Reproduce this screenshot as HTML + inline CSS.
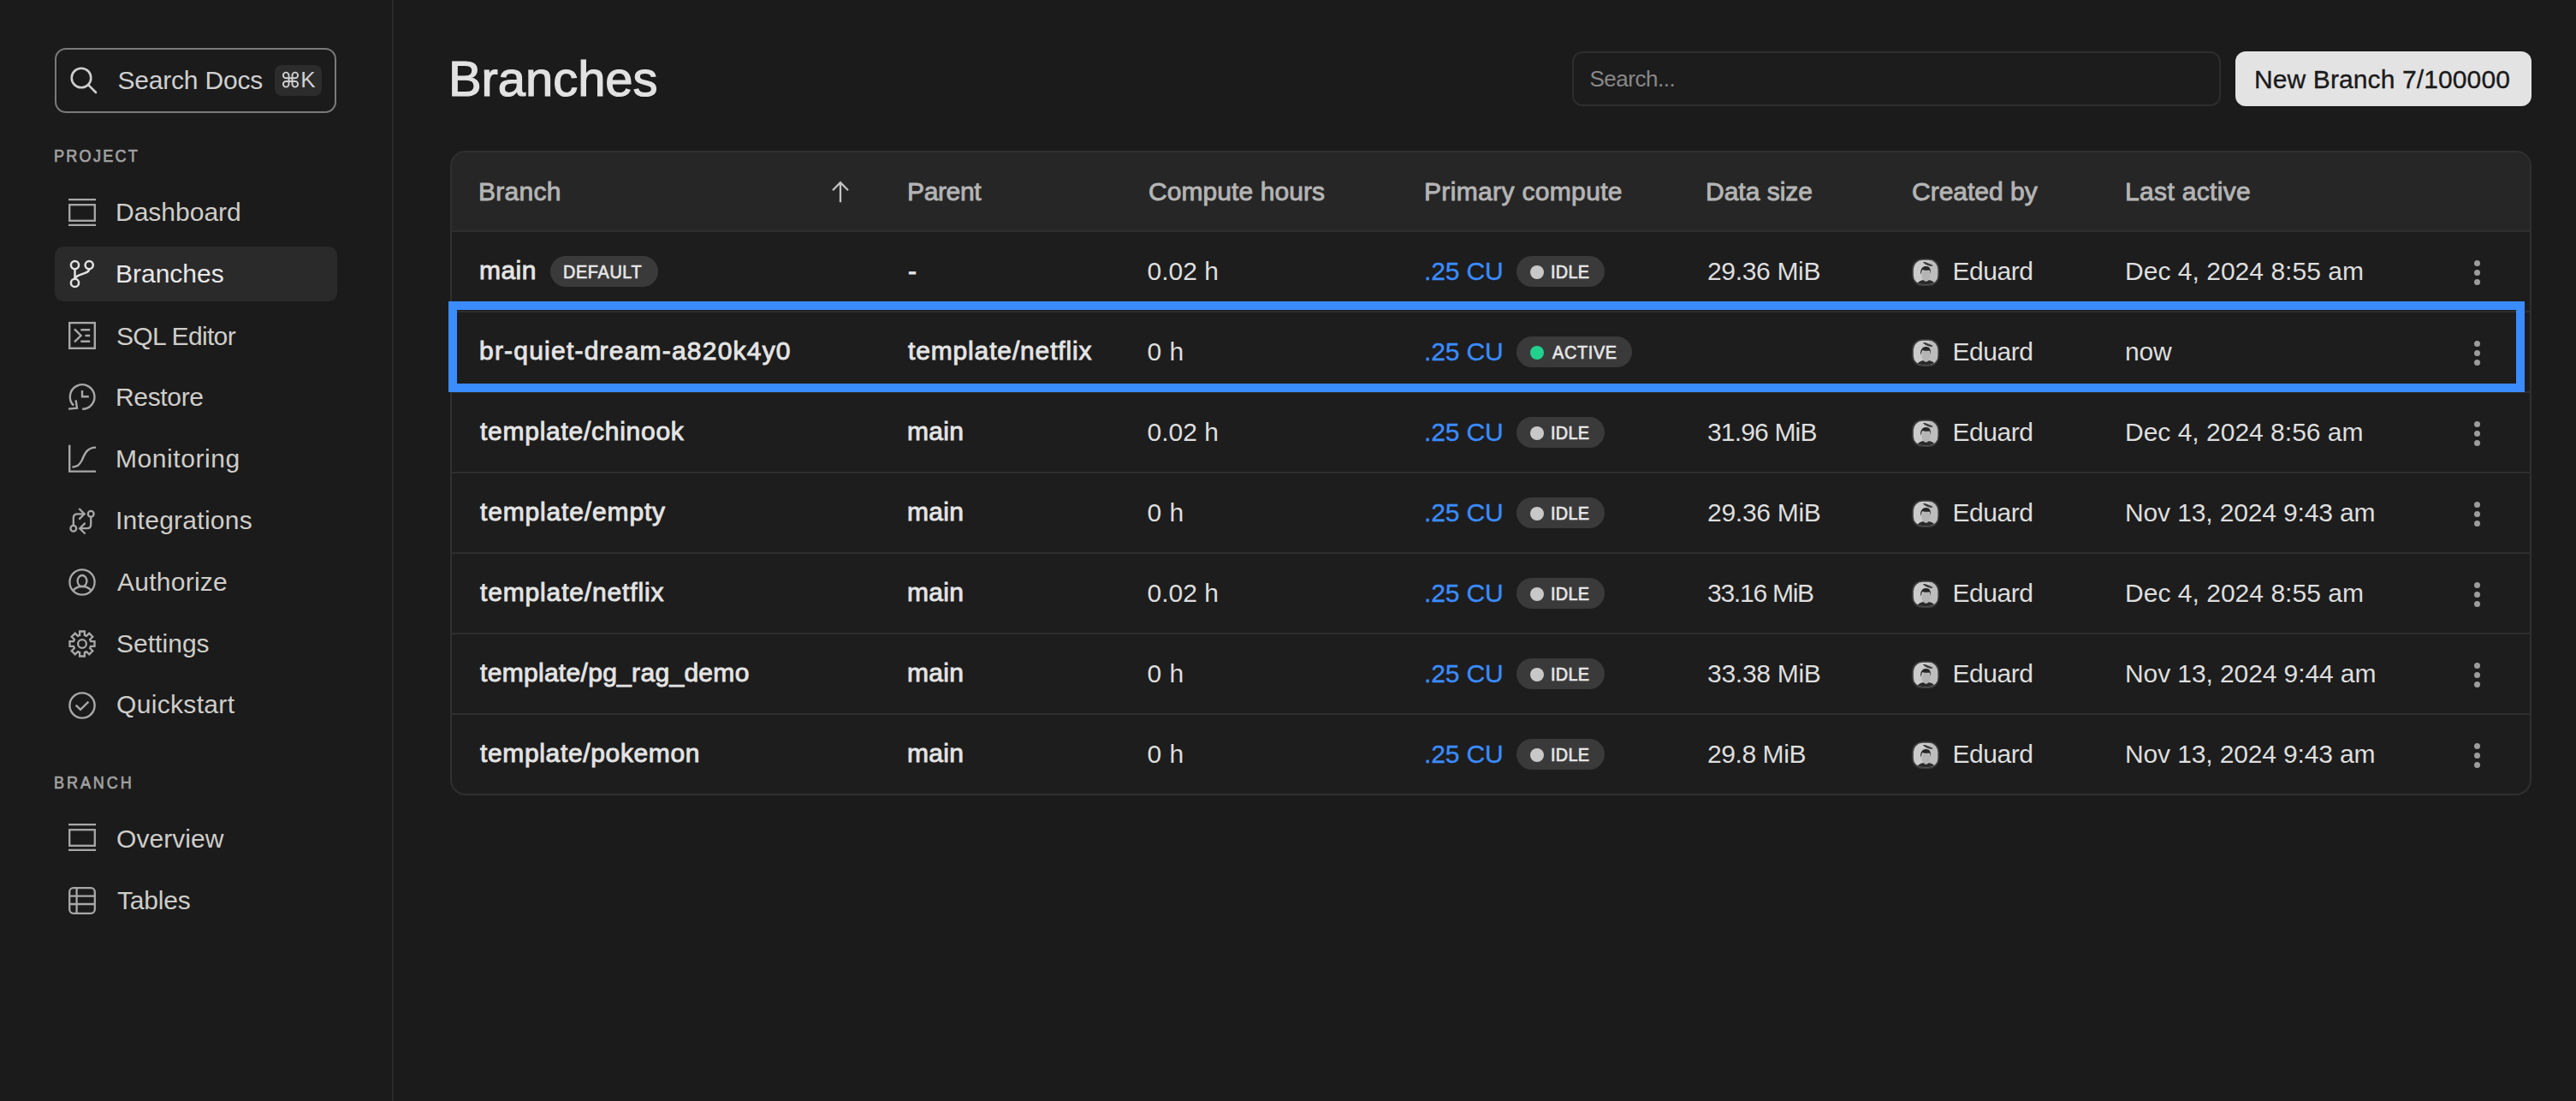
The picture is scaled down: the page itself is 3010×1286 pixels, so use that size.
<!DOCTYPE html><html><head><meta charset="utf-8"><style>
html,body{margin:0;padding:0;width:3010px;height:1286px;overflow:hidden;background:#1b1b1b;}
body{position:relative;font-family:"Liberation Sans",sans-serif;}
.a{position:absolute;box-sizing:border-box;}
.t{position:absolute;white-space:pre;line-height:1;}
svg{position:absolute;overflow:visible;}
</style></head><body>

<div class="a" style="left:458px;top:0;width:2px;height:1286px;background:#2a2a2a"></div>
<div class="a" style="left:64px;top:56px;width:329px;height:76px;border:2px solid #7a7a7a;border-radius:13px"></div>
<div class="a" style="left:321px;top:76px;width:55px;height:36px;border-radius:8px;background:#2c2c2c"></div>
<div class="a" style="left:64px;top:288px;width:330px;height:64px;border-radius:10px;background:#2a2a2a"></div>
<div class="a" style="left:1837px;top:60px;width:758px;height:64px;border:2px solid #2d2d2d;border-radius:12px;background:#1c1c1c"></div>
<div class="a" style="left:2612px;top:60px;width:346px;height:64px;border-radius:12px;background:#e3e3e3"></div>
<div class="a" style="left:526px;top:176px;width:2432px;height:753px;border:2px solid #303030;border-radius:18px;background:#1d1d1d;overflow:hidden">
<div class="a" style="left:0;top:0;width:2428px;height:91px;background:#262626"></div>
<div class="a" style="left:0;top:91px;width:2428px;height:2px;background:#2e2e2e"></div>
<div class="a" style="left:0;top:185px;width:2428px;height:2px;background:#2e2e2e"></div>
<div class="a" style="left:0;top:279px;width:2428px;height:2px;background:#2e2e2e"></div>
<div class="a" style="left:0;top:373px;width:2428px;height:2px;background:#2e2e2e"></div>
<div class="a" style="left:0;top:467px;width:2428px;height:2px;background:#2e2e2e"></div>
<div class="a" style="left:0;top:561px;width:2428px;height:2px;background:#2e2e2e"></div>
<div class="a" style="left:0;top:655px;width:2428px;height:2px;background:#2e2e2e"></div>
</div>
<div class="a" style="left:524px;top:352px;width:2426px;height:106px;border:10px solid #3b8cff"></div>
<svg style="left:80px;top:76px" width="40" height="40" viewBox="80 76 40 40" fill="none" stroke="#cfcfcf" stroke-width="2.6"><circle cx="95" cy="91" r="11.3"/><path d="M103.2 99.2L112 108" stroke-linecap="round"/></svg>
<svg style="left:326px;top:80px" width="28" height="28" viewBox="326 80 28 28" fill="none" stroke="#d0d0d0" stroke-width="1.9"><path d="M337.5 91.2V87.9A3.3 3.3 0 1 0 334.2 91.2H344.8A3.3 3.3 0 1 0 341.5 87.9V98.3A3.3 3.3 0 1 0 344.8 95H334.2A3.3 3.3 0 1 0 337.5 98.3Z"/></svg>
<svg style="left:76px;top:228px" width="40" height="40" viewBox="76 228 40 40" fill="none" stroke="#a8a8a8" stroke-width="2.3"><path d="M80 233.1H112M80 262.9H112"/><rect x="81.2" y="239.2" width="29.6" height="18.6"/></svg>
<svg style="left:76px;top:958px" width="40" height="40" viewBox="76 958 40 40" fill="none" stroke="#a8a8a8" stroke-width="2.3"><path d="M80 963.1H112M80 992.9H112"/><rect x="81.2" y="969.2" width="29.6" height="18.6"/></svg>
<svg style="left:76px;top:296px" width="40" height="44" viewBox="76 296 40 44" fill="none" stroke="#e2e2e2" stroke-width="2.5"><circle cx="87.5" cy="309.6" r="4.6"/><circle cx="104.2" cy="309.6" r="4.6"/><circle cx="87.5" cy="330.4" r="4.6"/><path d="M87.5 314.2V325.8M104.2 314.2C104.2 317 102.5 317.6 100 318.6L92 321.6C89.5 322.6 88 323.8 87.8 325.8"/></svg>
<svg style="left:76px;top:372px" width="40" height="40" viewBox="76 372 40 40" fill="none" stroke="#a8a8a8" stroke-width="2.4"><rect x="81.2" y="377.1" width="29.6" height="29.7"/><path d="M87 384.3L94.6 392L87 399.4M94.3 385.2H105.2M99.4 392H105.2M94.3 398.8H105.2"/></svg>
<svg style="left:76px;top:444px" width="40" height="40" viewBox="76 444 40 40" fill="none" stroke="#a8a8a8" stroke-width="2.4"><path d="M96.2 477.8A14.3 14.3 0 1 0 86 473.6"/><path d="M80 477.6L90 476.6L88.6 467.4M96 456V463.2H103.8"/></svg>
<svg style="left:76px;top:516px" width="40" height="40" viewBox="76 516 40 40" fill="none" stroke="#a8a8a8" stroke-width="2.4"><path d="M81.2 519.8V550.6H112M84.4 545.6C90 545 92.5 543.5 95.5 538C99 530 101.5 522.8 112 522.6"/></svg>
<svg style="left:76px;top:588px" width="40" height="40" viewBox="76 588 40 40" fill="none" stroke="#a8a8a8" stroke-width="2.3"><circle cx="85.8" cy="617.2" r="3.4"/><circle cx="106.2" cy="600.3" r="3.4"/><path d="M85.8 613.8V605C85.8 602 87.5 600.3 90.5 600.3H99M92.3 594L98.7 600.3L92.3 606.6"/><path d="M106.2 603.7V612.5C106.2 615.5 104.5 617.2 101.5 617.2H93.2M99.6 610.9L93.2 617.2L99.6 623.5"/></svg>
<svg style="left:76px;top:660px" width="40" height="40" viewBox="76 660 40 40" fill="none" stroke="#a8a8a8" stroke-width="2.3"><circle cx="96" cy="680" r="14.6"/><ellipse cx="96" cy="678.6" rx="5.4" ry="6.6"/><path d="M85.2 690.2C87.6 686.6 91.2 685 96 685C100.8 685 104.4 686.6 106.8 690.2"/></svg>
<svg style="left:76px;top:732px" width="40" height="40" viewBox="76 732 40 40" fill="none" stroke="#a8a8a8" stroke-width="2.3"><path d="M93.14 742.00L93.12 737.48L98.88 737.48L98.86 742.00L101.05 742.91L104.23 739.70L108.30 743.77L105.09 746.95L106.00 749.14L110.52 749.12L110.52 754.88L106.00 754.86L105.09 757.05L108.30 760.23L104.23 764.30L101.05 761.09L98.86 762.00L98.88 766.52L93.12 766.52L93.14 762.00L90.95 761.09L87.77 764.30L83.70 760.23L86.91 757.05L86.00 754.86L81.48 754.88L81.48 749.12L86.00 749.14L86.91 746.95L83.70 743.77L87.77 739.70L90.95 742.91Z" stroke-linejoin="miter"/><circle cx="96" cy="752" r="4.9"/></svg>
<svg style="left:76px;top:804px" width="40" height="40" viewBox="76 804 40 40" fill="none" stroke="#a8a8a8" stroke-width="2.4"><circle cx="96" cy="824" r="14.6"/><path d="M88.6 823.6L94 828.8L103.4 819.6"/></svg>
<svg style="left:76px;top:1032px" width="40" height="40" viewBox="76 1032 40 40" fill="none" stroke="#a8a8a8" stroke-width="2.3"><rect x="81.2" y="1037.2" width="29.6" height="29.6" rx="4.6"/><path d="M89.6 1037.2V1066.8M81.2 1046.7H110.8M81.2 1056H110.8"/></svg>
<svg style="left:962px;top:202px" width="40" height="40" viewBox="962 202 40 40"><path d="M982 236.2V213.8M973 222.2L982 213.2L991 222.2" fill="none" stroke="#c2c2c2" stroke-width="2.3"/></svg>
<div class="a" style="left:643px;top:299px;width:126px;height:36px;border-radius:18px;background:#3a3a3a"></div>
<div class="a" style="left:1771.7px;top:299.0px;width:103.0px;height:36px;border-radius:18px;background:#3a3a3a"></div>
<div class="a" style="left:1787.7px;top:309.6px;width:16px;height:16px;border-radius:50%;background:#c8c8c8"></div>
<svg style="left:2234.2px;top:301.8px" width="32" height="32" viewBox="0 0 31.6 31.6"><rect x="0" y="0" width="31.6" height="31.6" rx="12" fill="#3a3a3a"/><clipPath id="avc0"><rect x="1.8" y="1.8" width="28" height="28" rx="10.4"/></clipPath><g clip-path="url(#avc0)"><rect x="0" y="0" width="31.6" height="31.6" fill="#cbcbcb"/><rect x="20" y="0" width="12" height="31.6" fill="#bdbdbd"/><ellipse cx="16.2" cy="19.6" rx="4.9" ry="6.4" fill="#b4b4b4"/><path d="M10.2 18.5C9.4 13 11.5 9 16 8.8C20.5 8.6 22.2 12 21.6 17.5L20.6 13.6C18 13.8 14 13.6 12.2 12.8C11.3 14.5 11 16.5 10.2 18.5Z" fill="#262626"/><path d="M12.6 4.2C15 3 19 5.5 24.6 7.8L22.6 9C19 8.4 16 7.6 12.6 4.2Z" fill="#3c3c3c"/><path d="M5 31.6C6 27.5 9 25.6 13.2 24.8C15 27 17.5 27 19.6 24.8C23.5 25.4 26.5 27.5 27.5 31.6Z" fill="#2a2a2a"/></g></svg>
<div class="a" style="left:2890.5px;top:303.5px;width:7px;height:7px;border-radius:50%;background:#9c9c9c"></div>
<div class="a" style="left:2890.5px;top:314.5px;width:7px;height:7px;border-radius:50%;background:#9c9c9c"></div>
<div class="a" style="left:2890.5px;top:325.5px;width:7px;height:7px;border-radius:50%;background:#9c9c9c"></div>
<div class="a" style="left:1771.7px;top:393.0px;width:135.3px;height:36px;border-radius:18px;background:#3a3a3a"></div>
<div class="a" style="left:1787.7px;top:403.6px;width:16px;height:16px;border-radius:50%;background:#21d28e"></div>
<svg style="left:2234.2px;top:395.8px" width="32" height="32" viewBox="0 0 31.6 31.6"><rect x="0" y="0" width="31.6" height="31.6" rx="12" fill="#3a3a3a"/><clipPath id="avc1"><rect x="1.8" y="1.8" width="28" height="28" rx="10.4"/></clipPath><g clip-path="url(#avc1)"><rect x="0" y="0" width="31.6" height="31.6" fill="#cbcbcb"/><rect x="20" y="0" width="12" height="31.6" fill="#bdbdbd"/><ellipse cx="16.2" cy="19.6" rx="4.9" ry="6.4" fill="#b4b4b4"/><path d="M10.2 18.5C9.4 13 11.5 9 16 8.8C20.5 8.6 22.2 12 21.6 17.5L20.6 13.6C18 13.8 14 13.6 12.2 12.8C11.3 14.5 11 16.5 10.2 18.5Z" fill="#262626"/><path d="M12.6 4.2C15 3 19 5.5 24.6 7.8L22.6 9C19 8.4 16 7.6 12.6 4.2Z" fill="#3c3c3c"/><path d="M5 31.6C6 27.5 9 25.6 13.2 24.8C15 27 17.5 27 19.6 24.8C23.5 25.4 26.5 27.5 27.5 31.6Z" fill="#2a2a2a"/></g></svg>
<div class="a" style="left:2890.5px;top:397.5px;width:7px;height:7px;border-radius:50%;background:#9c9c9c"></div>
<div class="a" style="left:2890.5px;top:408.5px;width:7px;height:7px;border-radius:50%;background:#9c9c9c"></div>
<div class="a" style="left:2890.5px;top:419.5px;width:7px;height:7px;border-radius:50%;background:#9c9c9c"></div>
<div class="a" style="left:1771.7px;top:487.0px;width:103.0px;height:36px;border-radius:18px;background:#3a3a3a"></div>
<div class="a" style="left:1787.7px;top:497.6px;width:16px;height:16px;border-radius:50%;background:#c8c8c8"></div>
<svg style="left:2234.2px;top:489.8px" width="32" height="32" viewBox="0 0 31.6 31.6"><rect x="0" y="0" width="31.6" height="31.6" rx="12" fill="#3a3a3a"/><clipPath id="avc2"><rect x="1.8" y="1.8" width="28" height="28" rx="10.4"/></clipPath><g clip-path="url(#avc2)"><rect x="0" y="0" width="31.6" height="31.6" fill="#cbcbcb"/><rect x="20" y="0" width="12" height="31.6" fill="#bdbdbd"/><ellipse cx="16.2" cy="19.6" rx="4.9" ry="6.4" fill="#b4b4b4"/><path d="M10.2 18.5C9.4 13 11.5 9 16 8.8C20.5 8.6 22.2 12 21.6 17.5L20.6 13.6C18 13.8 14 13.6 12.2 12.8C11.3 14.5 11 16.5 10.2 18.5Z" fill="#262626"/><path d="M12.6 4.2C15 3 19 5.5 24.6 7.8L22.6 9C19 8.4 16 7.6 12.6 4.2Z" fill="#3c3c3c"/><path d="M5 31.6C6 27.5 9 25.6 13.2 24.8C15 27 17.5 27 19.6 24.8C23.5 25.4 26.5 27.5 27.5 31.6Z" fill="#2a2a2a"/></g></svg>
<div class="a" style="left:2890.5px;top:491.5px;width:7px;height:7px;border-radius:50%;background:#9c9c9c"></div>
<div class="a" style="left:2890.5px;top:502.5px;width:7px;height:7px;border-radius:50%;background:#9c9c9c"></div>
<div class="a" style="left:2890.5px;top:513.5px;width:7px;height:7px;border-radius:50%;background:#9c9c9c"></div>
<div class="a" style="left:1771.7px;top:581.0px;width:103.0px;height:36px;border-radius:18px;background:#3a3a3a"></div>
<div class="a" style="left:1787.7px;top:591.6px;width:16px;height:16px;border-radius:50%;background:#c8c8c8"></div>
<svg style="left:2234.2px;top:583.8px" width="32" height="32" viewBox="0 0 31.6 31.6"><rect x="0" y="0" width="31.6" height="31.6" rx="12" fill="#3a3a3a"/><clipPath id="avc3"><rect x="1.8" y="1.8" width="28" height="28" rx="10.4"/></clipPath><g clip-path="url(#avc3)"><rect x="0" y="0" width="31.6" height="31.6" fill="#cbcbcb"/><rect x="20" y="0" width="12" height="31.6" fill="#bdbdbd"/><ellipse cx="16.2" cy="19.6" rx="4.9" ry="6.4" fill="#b4b4b4"/><path d="M10.2 18.5C9.4 13 11.5 9 16 8.8C20.5 8.6 22.2 12 21.6 17.5L20.6 13.6C18 13.8 14 13.6 12.2 12.8C11.3 14.5 11 16.5 10.2 18.5Z" fill="#262626"/><path d="M12.6 4.2C15 3 19 5.5 24.6 7.8L22.6 9C19 8.4 16 7.6 12.6 4.2Z" fill="#3c3c3c"/><path d="M5 31.6C6 27.5 9 25.6 13.2 24.8C15 27 17.5 27 19.6 24.8C23.5 25.4 26.5 27.5 27.5 31.6Z" fill="#2a2a2a"/></g></svg>
<div class="a" style="left:2890.5px;top:585.5px;width:7px;height:7px;border-radius:50%;background:#9c9c9c"></div>
<div class="a" style="left:2890.5px;top:596.5px;width:7px;height:7px;border-radius:50%;background:#9c9c9c"></div>
<div class="a" style="left:2890.5px;top:607.5px;width:7px;height:7px;border-radius:50%;background:#9c9c9c"></div>
<div class="a" style="left:1771.7px;top:675.0px;width:103.0px;height:36px;border-radius:18px;background:#3a3a3a"></div>
<div class="a" style="left:1787.7px;top:685.6px;width:16px;height:16px;border-radius:50%;background:#c8c8c8"></div>
<svg style="left:2234.2px;top:677.8px" width="32" height="32" viewBox="0 0 31.6 31.6"><rect x="0" y="0" width="31.6" height="31.6" rx="12" fill="#3a3a3a"/><clipPath id="avc4"><rect x="1.8" y="1.8" width="28" height="28" rx="10.4"/></clipPath><g clip-path="url(#avc4)"><rect x="0" y="0" width="31.6" height="31.6" fill="#cbcbcb"/><rect x="20" y="0" width="12" height="31.6" fill="#bdbdbd"/><ellipse cx="16.2" cy="19.6" rx="4.9" ry="6.4" fill="#b4b4b4"/><path d="M10.2 18.5C9.4 13 11.5 9 16 8.8C20.5 8.6 22.2 12 21.6 17.5L20.6 13.6C18 13.8 14 13.6 12.2 12.8C11.3 14.5 11 16.5 10.2 18.5Z" fill="#262626"/><path d="M12.6 4.2C15 3 19 5.5 24.6 7.8L22.6 9C19 8.4 16 7.6 12.6 4.2Z" fill="#3c3c3c"/><path d="M5 31.6C6 27.5 9 25.6 13.2 24.8C15 27 17.5 27 19.6 24.8C23.5 25.4 26.5 27.5 27.5 31.6Z" fill="#2a2a2a"/></g></svg>
<div class="a" style="left:2890.5px;top:679.5px;width:7px;height:7px;border-radius:50%;background:#9c9c9c"></div>
<div class="a" style="left:2890.5px;top:690.5px;width:7px;height:7px;border-radius:50%;background:#9c9c9c"></div>
<div class="a" style="left:2890.5px;top:701.5px;width:7px;height:7px;border-radius:50%;background:#9c9c9c"></div>
<div class="a" style="left:1771.7px;top:769.0px;width:103.0px;height:36px;border-radius:18px;background:#3a3a3a"></div>
<div class="a" style="left:1787.7px;top:779.6px;width:16px;height:16px;border-radius:50%;background:#c8c8c8"></div>
<svg style="left:2234.2px;top:771.8px" width="32" height="32" viewBox="0 0 31.6 31.6"><rect x="0" y="0" width="31.6" height="31.6" rx="12" fill="#3a3a3a"/><clipPath id="avc5"><rect x="1.8" y="1.8" width="28" height="28" rx="10.4"/></clipPath><g clip-path="url(#avc5)"><rect x="0" y="0" width="31.6" height="31.6" fill="#cbcbcb"/><rect x="20" y="0" width="12" height="31.6" fill="#bdbdbd"/><ellipse cx="16.2" cy="19.6" rx="4.9" ry="6.4" fill="#b4b4b4"/><path d="M10.2 18.5C9.4 13 11.5 9 16 8.8C20.5 8.6 22.2 12 21.6 17.5L20.6 13.6C18 13.8 14 13.6 12.2 12.8C11.3 14.5 11 16.5 10.2 18.5Z" fill="#262626"/><path d="M12.6 4.2C15 3 19 5.5 24.6 7.8L22.6 9C19 8.4 16 7.6 12.6 4.2Z" fill="#3c3c3c"/><path d="M5 31.6C6 27.5 9 25.6 13.2 24.8C15 27 17.5 27 19.6 24.8C23.5 25.4 26.5 27.5 27.5 31.6Z" fill="#2a2a2a"/></g></svg>
<div class="a" style="left:2890.5px;top:773.5px;width:7px;height:7px;border-radius:50%;background:#9c9c9c"></div>
<div class="a" style="left:2890.5px;top:784.5px;width:7px;height:7px;border-radius:50%;background:#9c9c9c"></div>
<div class="a" style="left:2890.5px;top:795.5px;width:7px;height:7px;border-radius:50%;background:#9c9c9c"></div>
<div class="a" style="left:1771.7px;top:863.0px;width:103.0px;height:36px;border-radius:18px;background:#3a3a3a"></div>
<div class="a" style="left:1787.7px;top:873.6px;width:16px;height:16px;border-radius:50%;background:#c8c8c8"></div>
<svg style="left:2234.2px;top:865.8px" width="32" height="32" viewBox="0 0 31.6 31.6"><rect x="0" y="0" width="31.6" height="31.6" rx="12" fill="#3a3a3a"/><clipPath id="avc6"><rect x="1.8" y="1.8" width="28" height="28" rx="10.4"/></clipPath><g clip-path="url(#avc6)"><rect x="0" y="0" width="31.6" height="31.6" fill="#cbcbcb"/><rect x="20" y="0" width="12" height="31.6" fill="#bdbdbd"/><ellipse cx="16.2" cy="19.6" rx="4.9" ry="6.4" fill="#b4b4b4"/><path d="M10.2 18.5C9.4 13 11.5 9 16 8.8C20.5 8.6 22.2 12 21.6 17.5L20.6 13.6C18 13.8 14 13.6 12.2 12.8C11.3 14.5 11 16.5 10.2 18.5Z" fill="#262626"/><path d="M12.6 4.2C15 3 19 5.5 24.6 7.8L22.6 9C19 8.4 16 7.6 12.6 4.2Z" fill="#3c3c3c"/><path d="M5 31.6C6 27.5 9 25.6 13.2 24.8C15 27 17.5 27 19.6 24.8C23.5 25.4 26.5 27.5 27.5 31.6Z" fill="#2a2a2a"/></g></svg>
<div class="a" style="left:2890.5px;top:867.5px;width:7px;height:7px;border-radius:50%;background:#9c9c9c"></div>
<div class="a" style="left:2890.5px;top:878.5px;width:7px;height:7px;border-radius:50%;background:#9c9c9c"></div>
<div class="a" style="left:2890.5px;top:889.5px;width:7px;height:7px;border-radius:50%;background:#9c9c9c"></div>
<div class="t" id="sd" style="left:137.50px;top:78.80px;font-size:30px;font-weight:400;color:#cfcfcf;letter-spacing:-0.200px">Search Docs</div>
<div class="t" id="k" style="left:351.20px;top:79.90px;font-size:26px;font-weight:400;color:#d0d0d0;letter-spacing:0.000px">K</div>
<div class="t" id="proj" style="left:63.00px;top:171.00px;font-size:21px;font-weight:400;color:#a2a2a2;letter-spacing:2.616px;-webkit-text-stroke:0.70px #a2a2a2;transform:scaleX(0.860);transform-origin:0 0">PROJECT</div>
<div class="t" id="nav0" style="left:135.00px;top:233.00px;font-size:30px;font-weight:400;color:#cfcdc9;letter-spacing:0.000px">Dashboard</div>
<div class="t" id="nav1" style="left:135.00px;top:305.00px;font-size:30px;font-weight:400;color:#e8e8e8;letter-spacing:0.000px">Branches</div>
<div class="t" id="nav2" style="left:136.00px;top:377.70px;font-size:30px;font-weight:400;color:#cfcdc9;letter-spacing:-0.667px">SQL Editor</div>
<div class="t" id="nav3" style="left:135.00px;top:449.40px;font-size:30px;font-weight:400;color:#cfcdc9;letter-spacing:-0.333px">Restore</div>
<div class="t" id="nav4" style="left:135.00px;top:521.00px;font-size:30px;font-weight:400;color:#cfcdc9;letter-spacing:0.556px">Monitoring</div>
<div class="t" id="nav5" style="left:135.00px;top:592.80px;font-size:30px;font-weight:400;color:#cfcdc9;letter-spacing:0.273px">Integrations</div>
<div class="t" id="nav6" style="left:137.00px;top:665.00px;font-size:30px;font-weight:400;color:#cfcdc9;letter-spacing:0.250px">Authorize</div>
<div class="t" id="nav7" style="left:136.00px;top:736.70px;font-size:30px;font-weight:400;color:#cfcdc9;letter-spacing:0.029px">Settings</div>
<div class="t" id="nav8" style="left:136.00px;top:808.00px;font-size:30px;font-weight:400;color:#cfcdc9;letter-spacing:0.333px">Quickstart</div>
<div class="t" id="brl" style="left:63.00px;top:902.90px;font-size:21px;font-weight:400;color:#a2a2a2;letter-spacing:3.372px;-webkit-text-stroke:0.70px #a2a2a2;transform:scaleX(0.860);transform-origin:0 0">BRANCH</div>
<div class="t" id="nav9" style="left:136.00px;top:964.50px;font-size:30px;font-weight:400;color:#cfcdc9;letter-spacing:0.057px">Overview</div>
<div class="t" id="nav10" style="left:137.00px;top:1036.60px;font-size:30px;font-weight:400;color:#cfcdc9;letter-spacing:-0.200px">Tables</div>
<div class="t" id="title" style="left:524.00px;top:62.50px;font-size:58px;font-weight:400;color:#e2e2e2;letter-spacing:-0.071px;-webkit-text-stroke:1.20px #e2e2e2">Branches</div>
<div class="t" id="sph" style="left:1857.40px;top:79.00px;font-size:26px;font-weight:400;color:#888888;letter-spacing:-0.463px">Search...</div>
<div class="t" id="btn" style="left:2634.00px;top:77.80px;font-size:30px;font-weight:400;color:#1a1a1a;letter-spacing:0.111px;-webkit-text-stroke:0.35px #1a1a1a">New Branch 7/100000</div>
<div class="t" id="h0" style="left:559.00px;top:208.50px;font-size:30px;font-weight:400;color:#b4b4b4;letter-spacing:0.280px;-webkit-text-stroke:0.90px #b4b4b4">Branch</div>
<div class="t" id="h1" style="left:1060.00px;top:208.50px;font-size:30px;font-weight:400;color:#b4b4b4;letter-spacing:-0.360px;-webkit-text-stroke:0.90px #b4b4b4">Parent</div>
<div class="t" id="h2" style="left:1342.00px;top:208.50px;font-size:30px;font-weight:400;color:#b4b4b4;letter-spacing:0.083px;-webkit-text-stroke:0.90px #b4b4b4">Compute hours</div>
<div class="t" id="h3" style="left:1664.00px;top:208.50px;font-size:30px;font-weight:400;color:#b4b4b4;letter-spacing:0.343px;-webkit-text-stroke:0.90px #b4b4b4">Primary compute</div>
<div class="t" id="h4" style="left:1993.00px;top:208.50px;font-size:30px;font-weight:400;color:#b4b4b4;letter-spacing:0.000px;-webkit-text-stroke:0.90px #b4b4b4">Data size</div>
<div class="t" id="h5" style="left:2234.00px;top:208.50px;font-size:30px;font-weight:400;color:#b4b4b4;letter-spacing:0.000px;-webkit-text-stroke:0.90px #b4b4b4">Created by</div>
<div class="t" id="h6" style="left:2483.00px;top:208.50px;font-size:30px;font-weight:400;color:#b4b4b4;letter-spacing:0.340px;-webkit-text-stroke:0.90px #b4b4b4">Last active</div>
<div class="t" id="r0n" style="left:560.00px;top:300.90px;font-size:30px;font-weight:400;color:#e4e4e4;letter-spacing:0.467px;-webkit-text-stroke:0.90px #e4e4e4">main</div>
<div class="t" id="r0p" style="left:1061.00px;top:302.30px;font-size:30px;font-weight:400;color:#e4e4e4;letter-spacing:5.000px;-webkit-text-stroke:0.90px #e4e4e4">-</div>
<div class="t" id="r0c" style="left:1340.50px;top:302.30px;font-size:30px;font-weight:400;color:#dedede;letter-spacing:0.000px">0.02 h</div>
<div class="t" id="r0cu" style="left:1664.00px;top:302.30px;font-size:30px;font-weight:400;color:#3b8cff;letter-spacing:-0.160px;-webkit-text-stroke:0.35px #3b8cff">.25 CU</div>
<div class="t" id="r0st" style="left:1812.00px;top:307.10px;font-size:22px;font-weight:400;color:#e6e6e6;letter-spacing:0.370px;-webkit-text-stroke:0.70px #e6e6e6;transform:scaleX(0.900);transform-origin:0 0">IDLE</div>
<div class="t" id="r0ds" style="left:1995.00px;top:302.30px;font-size:30px;font-weight:400;color:#dedede;letter-spacing:-0.325px">29.36 MiB</div>
<div class="t" id="r0ed" style="left:2281.50px;top:302.30px;font-size:30px;font-weight:400;color:#dedede;letter-spacing:-0.440px">Eduard</div>
<div class="t" id="r0dt" style="left:2483.00px;top:302.30px;font-size:30px;font-weight:400;color:#dedede;letter-spacing:0.022px">Dec 4, 2024 8:55 am</div>
<div class="t" id="r1n" style="left:560.00px;top:394.90px;font-size:30px;font-weight:400;color:#e4e4e4;letter-spacing:1.214px;-webkit-text-stroke:0.90px #e4e4e4">br-quiet-dream-a820k4y0</div>
<div class="t" id="r1p" style="left:1061.00px;top:394.90px;font-size:30px;font-weight:400;color:#e4e4e4;letter-spacing:0.853px;-webkit-text-stroke:0.90px #e4e4e4">template/netflix</div>
<div class="t" id="r1c" style="left:1340.50px;top:396.30px;font-size:30px;font-weight:400;color:#dedede;letter-spacing:0.500px">0 h</div>
<div class="t" id="r1cu" style="left:1664.00px;top:396.30px;font-size:30px;font-weight:400;color:#3b8cff;letter-spacing:-0.160px;-webkit-text-stroke:0.35px #3b8cff">.25 CU</div>
<div class="t" id="r1st" style="left:1814.00px;top:401.10px;font-size:22px;font-weight:400;color:#e6e6e6;letter-spacing:0.778px;-webkit-text-stroke:0.70px #e6e6e6;transform:scaleX(0.900);transform-origin:0 0">ACTIVE</div>
<div class="t" id="r1ed" style="left:2281.50px;top:396.30px;font-size:30px;font-weight:400;color:#dedede;letter-spacing:-0.440px">Eduard</div>
<div class="t" id="r1dt" style="left:2483.00px;top:396.30px;font-size:30px;font-weight:400;color:#dedede;letter-spacing:-0.200px">now</div>
<div class="t" id="r2n" style="left:561.00px;top:488.90px;font-size:30px;font-weight:400;color:#e4e4e4;letter-spacing:0.733px;-webkit-text-stroke:0.90px #e4e4e4">template/chinook</div>
<div class="t" id="r2p" style="left:1060.00px;top:488.90px;font-size:30px;font-weight:400;color:#e4e4e4;letter-spacing:0.267px;-webkit-text-stroke:0.90px #e4e4e4">main</div>
<div class="t" id="r2c" style="left:1340.50px;top:490.30px;font-size:30px;font-weight:400;color:#dedede;letter-spacing:0.000px">0.02 h</div>
<div class="t" id="r2cu" style="left:1664.00px;top:490.30px;font-size:30px;font-weight:400;color:#3b8cff;letter-spacing:-0.160px;-webkit-text-stroke:0.35px #3b8cff">.25 CU</div>
<div class="t" id="r2st" style="left:1812.00px;top:495.10px;font-size:22px;font-weight:400;color:#e6e6e6;letter-spacing:0.370px;-webkit-text-stroke:0.70px #e6e6e6;transform:scaleX(0.900);transform-origin:0 0">IDLE</div>
<div class="t" id="r2ds" style="left:1995.00px;top:490.30px;font-size:30px;font-weight:400;color:#dedede;letter-spacing:-0.825px">31.96 MiB</div>
<div class="t" id="r2ed" style="left:2281.50px;top:490.30px;font-size:30px;font-weight:400;color:#dedede;letter-spacing:-0.440px">Eduard</div>
<div class="t" id="r2dt" style="left:2483.00px;top:490.30px;font-size:30px;font-weight:400;color:#dedede;letter-spacing:0.000px">Dec 4, 2024 8:56 am</div>
<div class="t" id="r3n" style="left:561.00px;top:582.90px;font-size:30px;font-weight:400;color:#e4e4e4;letter-spacing:0.846px;-webkit-text-stroke:0.90px #e4e4e4">template/empty</div>
<div class="t" id="r3p" style="left:1060.00px;top:582.90px;font-size:30px;font-weight:400;color:#e4e4e4;letter-spacing:0.267px;-webkit-text-stroke:0.90px #e4e4e4">main</div>
<div class="t" id="r3c" style="left:1340.50px;top:584.30px;font-size:30px;font-weight:400;color:#dedede;letter-spacing:0.500px">0 h</div>
<div class="t" id="r3cu" style="left:1664.00px;top:584.30px;font-size:30px;font-weight:400;color:#3b8cff;letter-spacing:-0.160px;-webkit-text-stroke:0.35px #3b8cff">.25 CU</div>
<div class="t" id="r3st" style="left:1812.00px;top:589.10px;font-size:22px;font-weight:400;color:#e6e6e6;letter-spacing:0.370px;-webkit-text-stroke:0.70px #e6e6e6;transform:scaleX(0.900);transform-origin:0 0">IDLE</div>
<div class="t" id="r3ds" style="left:1995.00px;top:584.30px;font-size:30px;font-weight:400;color:#dedede;letter-spacing:-0.275px">29.36 MiB</div>
<div class="t" id="r3ed" style="left:2281.50px;top:584.30px;font-size:30px;font-weight:400;color:#dedede;letter-spacing:-0.440px">Eduard</div>
<div class="t" id="r3dt" style="left:2483.00px;top:584.30px;font-size:30px;font-weight:400;color:#dedede;letter-spacing:-0.137px">Nov 13, 2024 9:43 am</div>
<div class="t" id="r4n" style="left:561.00px;top:676.90px;font-size:30px;font-weight:400;color:#e4e4e4;letter-spacing:0.847px;-webkit-text-stroke:0.90px #e4e4e4">template/netflix</div>
<div class="t" id="r4p" style="left:1060.00px;top:676.90px;font-size:30px;font-weight:400;color:#e4e4e4;letter-spacing:0.267px;-webkit-text-stroke:0.90px #e4e4e4">main</div>
<div class="t" id="r4c" style="left:1340.50px;top:678.30px;font-size:30px;font-weight:400;color:#dedede;letter-spacing:0.000px">0.02 h</div>
<div class="t" id="r4cu" style="left:1664.00px;top:678.30px;font-size:30px;font-weight:400;color:#3b8cff;letter-spacing:-0.160px;-webkit-text-stroke:0.35px #3b8cff">.25 CU</div>
<div class="t" id="r4st" style="left:1812.00px;top:683.10px;font-size:22px;font-weight:400;color:#e6e6e6;letter-spacing:0.370px;-webkit-text-stroke:0.70px #e6e6e6;transform:scaleX(0.900);transform-origin:0 0">IDLE</div>
<div class="t" id="r4ds" style="left:1995.00px;top:678.30px;font-size:30px;font-weight:400;color:#dedede;letter-spacing:-1.250px">33.16 MiB</div>
<div class="t" id="r4ed" style="left:2281.50px;top:678.30px;font-size:30px;font-weight:400;color:#dedede;letter-spacing:-0.440px">Eduard</div>
<div class="t" id="r4dt" style="left:2483.00px;top:678.30px;font-size:30px;font-weight:400;color:#dedede;letter-spacing:0.022px">Dec 4, 2024 8:55 am</div>
<div class="t" id="r5n" style="left:561.00px;top:770.90px;font-size:30px;font-weight:400;color:#e4e4e4;letter-spacing:0.305px;-webkit-text-stroke:0.90px #e4e4e4">template/pg_rag_demo</div>
<div class="t" id="r5p" style="left:1060.00px;top:770.90px;font-size:30px;font-weight:400;color:#e4e4e4;letter-spacing:0.267px;-webkit-text-stroke:0.90px #e4e4e4">main</div>
<div class="t" id="r5c" style="left:1340.50px;top:772.30px;font-size:30px;font-weight:400;color:#dedede;letter-spacing:0.500px">0 h</div>
<div class="t" id="r5cu" style="left:1664.00px;top:772.30px;font-size:30px;font-weight:400;color:#3b8cff;letter-spacing:-0.160px;-webkit-text-stroke:0.35px #3b8cff">.25 CU</div>
<div class="t" id="r5st" style="left:1812.00px;top:777.10px;font-size:22px;font-weight:400;color:#e6e6e6;letter-spacing:0.370px;-webkit-text-stroke:0.70px #e6e6e6;transform:scaleX(0.900);transform-origin:0 0">IDLE</div>
<div class="t" id="r5ds" style="left:1995.00px;top:772.30px;font-size:30px;font-weight:400;color:#dedede;letter-spacing:-0.275px">33.38 MiB</div>
<div class="t" id="r5ed" style="left:2281.50px;top:772.30px;font-size:30px;font-weight:400;color:#dedede;letter-spacing:-0.440px">Eduard</div>
<div class="t" id="r5dt" style="left:2483.00px;top:772.30px;font-size:30px;font-weight:400;color:#dedede;letter-spacing:-0.095px">Nov 13, 2024 9:44 am</div>
<div class="t" id="r6n" style="left:561.00px;top:864.90px;font-size:30px;font-weight:400;color:#e4e4e4;letter-spacing:0.647px;-webkit-text-stroke:0.90px #e4e4e4">template/pokemon</div>
<div class="t" id="r6p" style="left:1060.00px;top:864.90px;font-size:30px;font-weight:400;color:#e4e4e4;letter-spacing:0.267px;-webkit-text-stroke:0.90px #e4e4e4">main</div>
<div class="t" id="r6c" style="left:1340.50px;top:866.30px;font-size:30px;font-weight:400;color:#dedede;letter-spacing:0.500px">0 h</div>
<div class="t" id="r6cu" style="left:1664.00px;top:866.30px;font-size:30px;font-weight:400;color:#3b8cff;letter-spacing:-0.160px;-webkit-text-stroke:0.35px #3b8cff">.25 CU</div>
<div class="t" id="r6st" style="left:1812.00px;top:871.10px;font-size:22px;font-weight:400;color:#e6e6e6;letter-spacing:0.370px;-webkit-text-stroke:0.70px #e6e6e6;transform:scaleX(0.900);transform-origin:0 0">IDLE</div>
<div class="t" id="r6ds" style="left:1995.00px;top:866.30px;font-size:30px;font-weight:400;color:#dedede;letter-spacing:-0.429px">29.8 MiB</div>
<div class="t" id="r6ed" style="left:2281.50px;top:866.30px;font-size:30px;font-weight:400;color:#dedede;letter-spacing:-0.440px">Eduard</div>
<div class="t" id="r6dt" style="left:2483.00px;top:866.30px;font-size:30px;font-weight:400;color:#dedede;letter-spacing:-0.137px">Nov 13, 2024 9:43 am</div>
<div class="t" id="def" style="left:658.00px;top:306.60px;font-size:22px;font-weight:400;color:#e6e6e6;letter-spacing:0.741px;-webkit-text-stroke:0.70px #e6e6e6;transform:scaleX(0.900);transform-origin:0 0">DEFAULT</div>
</body></html>
